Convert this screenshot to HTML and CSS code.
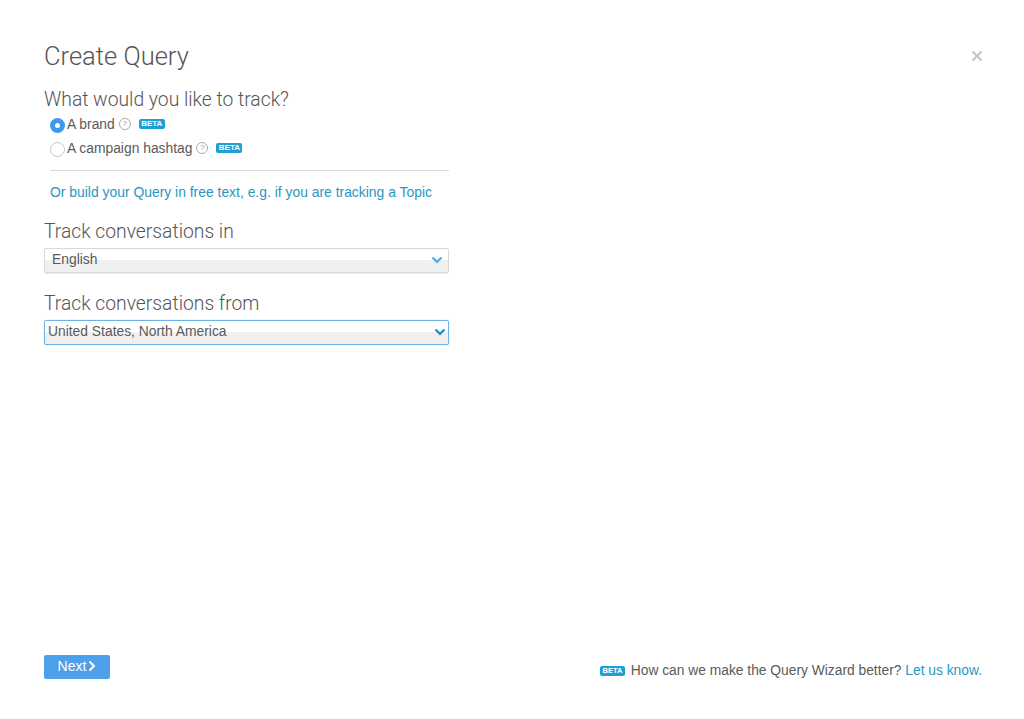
FILE: index.html
```html
<!DOCTYPE html>
<html lang="en">
<head>
    <meta charset="UTF-8">
    <meta name="viewport" content="width=device-width, initial-scale=1.0">
    <title>Create Query</title>
    <link rel="stylesheet" href="styles.css">
</head>
<body>
    <div class="wizard">
        <div class="wizard-main">
            <div class="wizard-header">
                <h1>Create Query</h1>
                <svg class="close-icon" width="12" height="12" viewBox="0 0 12 12"><path d="M1.5 1.5L10.5 10.5M10.5 1.5L1.5 10.5"/></svg>
            </div>

            <div class="form-container">
                <h2 class="track-title">What would you like to track?</h2>
                <div class="radio-row">
                    <span class="radio radio-on"></span>
                    <span class="radio-label">A brand</span>
                    <span class="help-icon">?</span>
                    <span class="beta">BETA</span>
                </div>
                <div class="radio-row">
                    <span class="radio"></span>
                    <span class="radio-label">A campaign hashtag</span>
                    <span class="help-icon">?</span>
                    <span class="beta">BETA</span>
                </div>
                <div class="free-text">
                    <a href="#">Or build your Query in free text, e.g. if you are tracking a Topic</a>
                </div>

                <h2 class="field-title">Track conversations in</h2>
                <div class="select-box">
                    <span>English</span>
                    <svg class="chevron" width="12" height="8" viewBox="0 0 12 8"><path d="M1.5 1.5L6 5.8L10.5 1.5"/></svg>
                </div>

                <h2 class="field-title field-from">Track conversations from</h2>
                <div class="select-box select-focus">
                    <span>United States, North America</span>
                    <svg class="chevron" width="12" height="8" viewBox="0 0 12 8"><path d="M1.5 1.5L6 5.8L10.5 1.5"/></svg>
                </div>
            </div>
        </div>

        <div class="wizard-footer">
            <button type="button" class="button">Next<svg width="8" height="12" viewBox="0 0 8 12"><path d="M1.5 1.5L6 6L1.5 10.5"/></svg></button>
            <p class="feedback">
                <span class="beta">BETA</span>
                How can we make the Query Wizard better? <a href="#">Let us know.</a>
            </p>
        </div>
    </div>
</body>
</html>
```

FILE: styles.css
```css
body {
    font-family: "Liberation Sans", Arial, sans-serif;
    background-color: #ffffff;
    color: #5a5a5a;
    margin: 0;
}
a {
    color: #2a96c4;
    text-decoration: none;
}
.wizard {
    height: 719px;
    box-sizing: border-box;
    padding: 41px 41px 40px 44px;
    display: flex;
    flex-direction: column;
    justify-content: space-between;
}
.wizard-header {
    display: flex;
    justify-content: space-between;
    align-items: center;
    height: 32px;
}
.wizard-header h1 {
    font-family: Roboto, sans-serif;
    font-weight: 300;
    font-size: 25.5px;
    line-height: 30px;
    color: #555555;
    margin: 0 0 2px;
}
.close-icon {
    margin-top: -2px;
}
.close-icon path {
    stroke: #c4c4c4;
    stroke-width: 2;
    fill: none;
}
.form-container {
    width: 405px;
}
h2 {
    font-family: Roboto, sans-serif;
    font-weight: 300;
    font-size: 19.3px;
    line-height: 24px;
    color: #555555;
    margin: 0;
}
.track-title {
    margin-top: 15px;
}
.radio-row {
    display: flex;
    align-items: center;
    height: 24px;
    padding-left: 6px;
    font-size: 13.85px;
}
.radio {
    width: 15px;
    height: 15px;
    box-sizing: border-box;
    border: 1px solid #c6c6c6;
    border-radius: 50%;
    background-color: #ffffff;
    margin-top: 3px;
}
.radio-on {
    border: 5px solid #3d98ee;
    background-color: #ffffff;
}
.radio-label {
    margin-left: 2px;
}
.help-icon {
    width: 12px;
    height: 12px;
    box-sizing: border-box;
    border: 1px solid #aaaaaa;
    border-radius: 50%;
    color: #999999;
    font-size: 8px;
    line-height: 10px;
    text-align: center;
    margin-left: 4px;
}
.beta {
    display: inline-block;
    width: 26px;
    height: 10px;
    background-color: #1ea0d5;
    border-radius: 2px;
    color: #ffffff;
    font-size: 8px;
    font-weight: bold;
    line-height: 10px;
    text-align: center;
}
.radio-row .beta {
    margin-left: 8px;
    margin-bottom: 1px;
}
.free-text {
    margin-left: 6px;
    margin-top: 10px;
    border-top: 1px solid #d9d9d9;
    padding-top: 14px;
    font-size: 13.9px;
    line-height: 15px;
}
.field-title {
    margin-top: 20px;
}
.field-from {
    margin-top: 19px;
}
.select-box {
    display: flex;
    justify-content: space-between;
    align-items: center;
    height: 25px;
    box-sizing: border-box;
    margin-top: 4px;
    padding: 0 5px 2px 7px;
    border: 1px solid #d8d8d8;
    border-radius: 2px;
    background: linear-gradient(#ffffff 50%, #f0f0f0 50%);
    box-shadow: 0 1px 1px rgba(0, 0, 0, 0.08);
    font-size: 13.85px;
}
.select-box span {
    margin-bottom: 2px;
}
.select-focus {
    padding: 0 2px 2px 3px;
    border-color: #6db3e8;
    box-shadow: 0 0 1px #6db3e8;
}
.chevron path {
    stroke: #55aeea;
    stroke-width: 2.4;
    fill: none;
}
.select-focus .chevron path {
    stroke: #2a8dc4;
}
.wizard-footer {
    display: flex;
    justify-content: space-between;
    align-items: flex-end;
}
.button {
    display: flex;
    align-items: center;
    justify-content: center;
    gap: 2px;
    width: 66px;
    height: 24px;
    background-color: #4d9fea;
    color: #ffffff;
    font-family: "Liberation Sans", Arial, sans-serif;
    font-size: 14px;
    border: 0;
    border-radius: 2px;
    padding: 0 0 2px;
}
.button path {
    stroke: #ffffff;
    stroke-width: 2;
    fill: none;
}
.feedback {
    font-size: 13.8px;
    line-height: 16px;
    margin: 0 1px 0 0;
}
.feedback .beta {
    width: 25px;
    height: 10px;
    font-size: 7.5px;
    line-height: 10px;
    margin-right: 2px;
    vertical-align: 2px;
}
```
